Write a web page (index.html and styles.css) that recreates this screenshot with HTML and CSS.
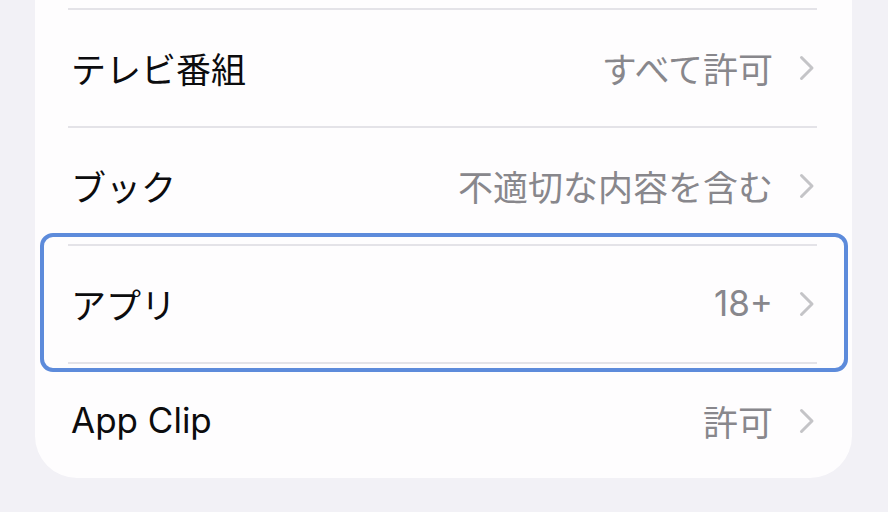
FILE: index.html
```html
<!DOCTYPE html>
<html lang="ja">
<head>
<meta charset="utf-8">
<link rel="stylesheet" href="styles.css">
</head>
<body>
<div class="card">
  <div class="top-spacer"></div>
  <div class="row">
    <span class="label">テレビ番組</span>
    <span class="value">すべて許可</span>
    <svg class="chev" viewBox="0 0 16 26" width="16" height="26"><path d="M2.5 2.5 L13 13 L2.5 23.5" fill="none" stroke="#c4c4c7" stroke-width="3" stroke-linecap="round" stroke-linejoin="round"/></svg>
  </div>
  <div class="row">
    <span class="label">ブック</span>
    <span class="value">不適切な内容を含む</span>
    <svg class="chev" viewBox="0 0 16 26" width="16" height="26"><path d="M2.5 2.5 L13 13 L2.5 23.5" fill="none" stroke="#c4c4c7" stroke-width="3" stroke-linecap="round" stroke-linejoin="round"/></svg>
  </div>
  <div class="row selected">
    <span class="label">アプリ</span>
    <span class="value">18+</span>
    <svg class="chev" viewBox="0 0 16 26" width="16" height="26"><path d="M2.5 2.5 L13 13 L2.5 23.5" fill="none" stroke="#c4c4c7" stroke-width="3" stroke-linecap="round" stroke-linejoin="round"/></svg>
    <div class="focus-ring"></div>
  </div>
  <div class="row last">
    <span class="label">App Clip</span>
    <span class="value">許可</span>
    <svg class="chev" viewBox="0 0 16 26" width="16" height="26"><path d="M2.5 2.5 L13 13 L2.5 23.5" fill="none" stroke="#c4c4c7" stroke-width="3" stroke-linecap="round" stroke-linejoin="round"/></svg>
  </div>
</div>
</body>
</html>
```
FILE: styles.css
```css
html, body {
  margin: 0;
  padding: 0;
}
body {
  background: #f2f1f6;
  width: 888px;
  height: 512px;
  overflow: hidden;
  font-family: Inter, "Noto Sans CJK JP", sans-serif;
}
.card {
  margin-left: 35px;
  width: 817px;
  background: #fefdfe;
  border-radius: 0 0 42px 42px;
  padding: 0 35px 0 33px;
  box-sizing: border-box;
}
.top-spacer {
  height: 8px;
}
.row {
  position: relative;
  display: flex;
  align-items: center;
  height: 118px;
  box-sizing: border-box;
  border-top: 2px solid #e4e3e8;
  padding: 0 2px 0 3px;
}
.row.last {
  height: 116px;
}
.label {
  flex: 1;
  font-size: 35px;
  color: #0c0c0e;
  margin-top: -2px;
}
.value {
  font-size: 35px;
  color: #88878c;
  margin-right: 26px;
  margin-top: -2px;
}
.chev {
  display: block;
  flex: none;
}
.focus-ring {
  position: absolute;
  left: -28px;
  top: -13px;
  width: 808px;
  height: 139px;
  box-sizing: border-box;
  border: 4px solid #5d8bdb;
  border-radius: 13px;
  pointer-events: none;
}
```
